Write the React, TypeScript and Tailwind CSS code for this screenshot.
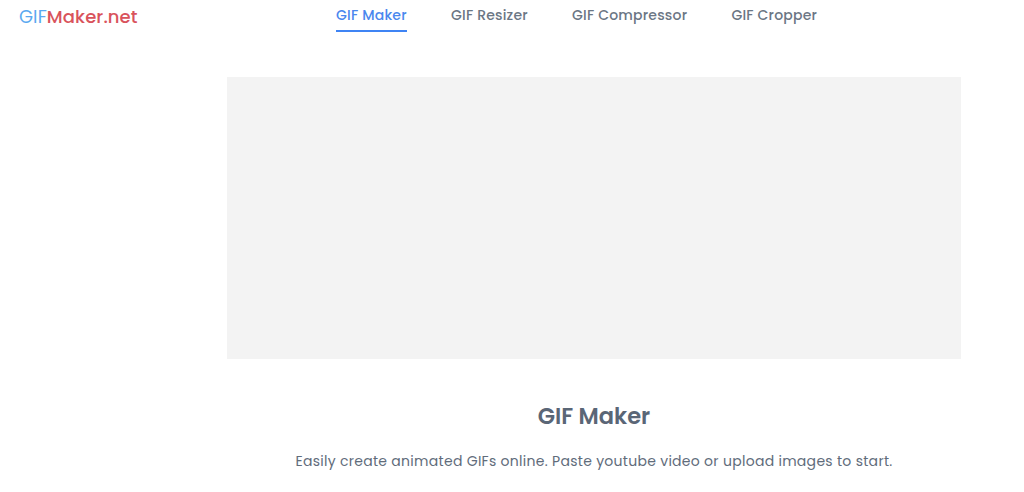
const tabs = ["GIF Maker", "GIF Resizer", "GIF Compressor", "GIF Cropper"]

export default function App() {
  return (
    <div className="h-[492px] w-[1024px] overflow-hidden bg-white font-['Poppins','Lato','Noto_Sans',sans-serif] text-[#616c7b]">
      <header className="flex h-[32px] items-start">
        <div className="ml-[19px] w-[317px] text-[18px] leading-[34px] tracking-[0.1px]">
          <span className="text-[#5aa9f0]">GIF</span>
          <span className="font-medium text-[#d9535c]">Maker.net</span>
        </div>
        <nav className="flex gap-[44.2px]">
          {tabs.map((tab, i) => (
            <a
              key={tab}
              className={
                i === 0
                  ? "h-[32px] border-b-2 border-[#3f84f4] text-[14px] font-medium leading-[30px] tracking-[0.2px] text-[#4a87ee]"
                  : "h-[32px] text-[14px] font-medium leading-[30px] tracking-[0.2px] text-[#6b7684]"
              }
            >
              {tab}
            </a>
          ))}
        </nav>
      </header>
      <main className="ml-[227px] w-[734px] pt-[45px]">
        <div className="h-[282px] bg-[#f3f3f3]" />
        <h1 className="mt-[42px] text-center text-[22.5px] font-semibold leading-[30px] text-[#5a6676]">GIF Maker</h1>
        <p className="mt-[15px] text-center text-[14px] leading-[30px] tracking-[0.29px]">
          Easily create animated GIFs online. Paste youtube video or upload images to start.
        </p>
      </main>
    </div>
  )
}
